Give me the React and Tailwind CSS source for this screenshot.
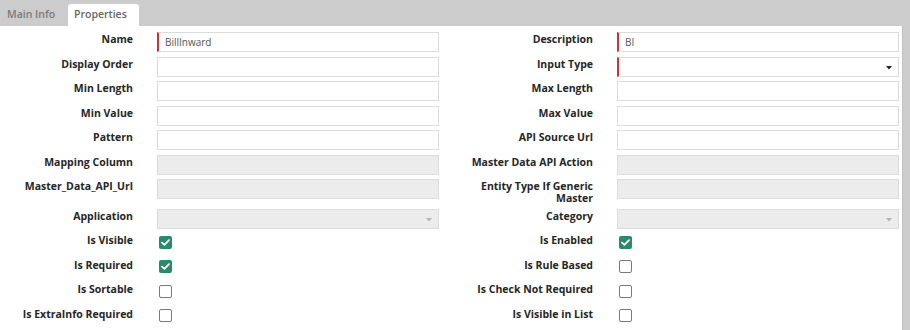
import React from "react";

const rows = [
  [
    { label: "Name", kind: "text", value: "BillInward", required: true },
    { label: "Description", kind: "text", value: "BI", required: true },
  ],
  [
    { label: "Display Order", kind: "text" },
    { label: "Input Type", kind: "select", required: true },
  ],
  [
    { label: "Min Length", kind: "text" },
    { label: "Max Length", kind: "text" },
  ],
  [
    { label: "Min Value", kind: "text" },
    { label: "Max Value", kind: "text" },
  ],
  [
    { label: "Pattern", kind: "text" },
    { label: "API Source Url", kind: "text" },
  ],
  [
    { label: "Mapping Column", kind: "disabled" },
    { label: "Master Data API Action", kind: "disabled" },
  ],
  [
    { label: "Master_Data_API_Url", kind: "disabled" },
    { label: "Entity Type If Generic Master", kind: "disabled" },
  ],
  [
    { label: "Application", kind: "disabledSelect" },
    { label: "Category", kind: "disabledSelect" },
  ],
  [
    { label: "Is Visible", kind: "check", checked: true },
    { label: "Is Enabled", kind: "check", checked: true },
  ],
  [
    { label: "Is Required", kind: "check", checked: true },
    { label: "Is Rule Based", kind: "check" },
  ],
  [
    { label: "Is Sortable", kind: "check" },
    { label: "Is Check Not Required", kind: "check" },
  ],
  [
    { label: "Is ExtraInfo Required", kind: "check" },
    { label: "Is Visible in List", kind: "check" },
  ],
];

function Caret({ muted }) {
  return (
    <svg width="6" height="4" viewBox="0 0 6 4" className="absolute right-[6px] top-[8px]">
      <path d="M0 0 L6 0 L3 3.5 Z" fill={muted ? "#b5b5b5" : "#222"} />
    </svg>
  );
}

function Control({ field }) {
  if (field.kind === "check") {
    return field.checked ? (
      <div className="ml-[2px] mt-[2.5px] w-[13px] h-[13px] rounded-[2px] bg-[#2a8a6c] flex items-center justify-center">
        <svg width="9" height="7" viewBox="0 0 9 7">
          <path d="M1 3.6 L3.4 5.8 L8 1.2" stroke="#fff" strokeWidth="1.8" fill="none" strokeLinecap="round" strokeLinejoin="round" />
        </svg>
      </div>
    ) : (
      <div className="ml-[2px] mt-[2.5px] w-[13px] h-[13px] rounded-[2px] border-[1.5px] border-[#7a7a7a] bg-white" />
    );
  }

  const disabled = field.kind === "disabled" || field.kind === "disabledSelect";
  return (
    <div
      className={`relative w-[282px] h-[20px] border border-[#dcdcdc] flex items-center pl-[6px] text-[10px] text-[#555] ${
        disabled ? "bg-[#ececec]" : "bg-white"
      } ${field.required ? "border-l-2 border-l-[#e8262b]" : ""}`}
    >
      {field.value}
      {field.kind === "select" && <Caret />}
      {field.kind === "disabledSelect" && <Caret muted />}
    </div>
  );
}

function Field({ field }) {
  return (
    <div className="flex items-start gap-[24px] min-h-[20px]">
      <div className="w-[133px] shrink-0 pt-[1px] text-right text-[10.5px] leading-[12px] font-bold text-[#262626]">
        {field.label}
      </div>
      <Control field={field} />
    </div>
  );
}

export default function App() {
  return (
    <div className="w-[910px] h-[330px] bg-[#cccccc] flex flex-col overflow-hidden font-['Open_Sans','Liberation_Sans',sans-serif]">
      {/* tabs */}
      <div className="h-[26px] flex items-end shrink-0">
        <div className="w-[68px] h-[22px] pl-[7px] flex items-center text-[10.5px] font-semibold text-[#7a7a7a]">
          Main Info
        </div>
        <div className="w-[71px] h-[22px] pl-[6px] flex items-center bg-white rounded-t-[3px] text-[10.5px] font-semibold text-[#666]">
          Properties
        </div>
      </div>

      {/* form */}
      <div className="flex-1 mr-[7px] bg-white border-r border-[#c2c2c2] pt-[6px]">
        <div className="grid grid-cols-[439px_439px] gap-x-[21px] gap-y-[4.5px]">
          {rows.map((row, i) => (
            <React.Fragment key={i}>
              <Field field={row[0]} />
              <Field field={row[1]} />
            </React.Fragment>
          ))}
        </div>
      </div>
    </div>
  );
}
